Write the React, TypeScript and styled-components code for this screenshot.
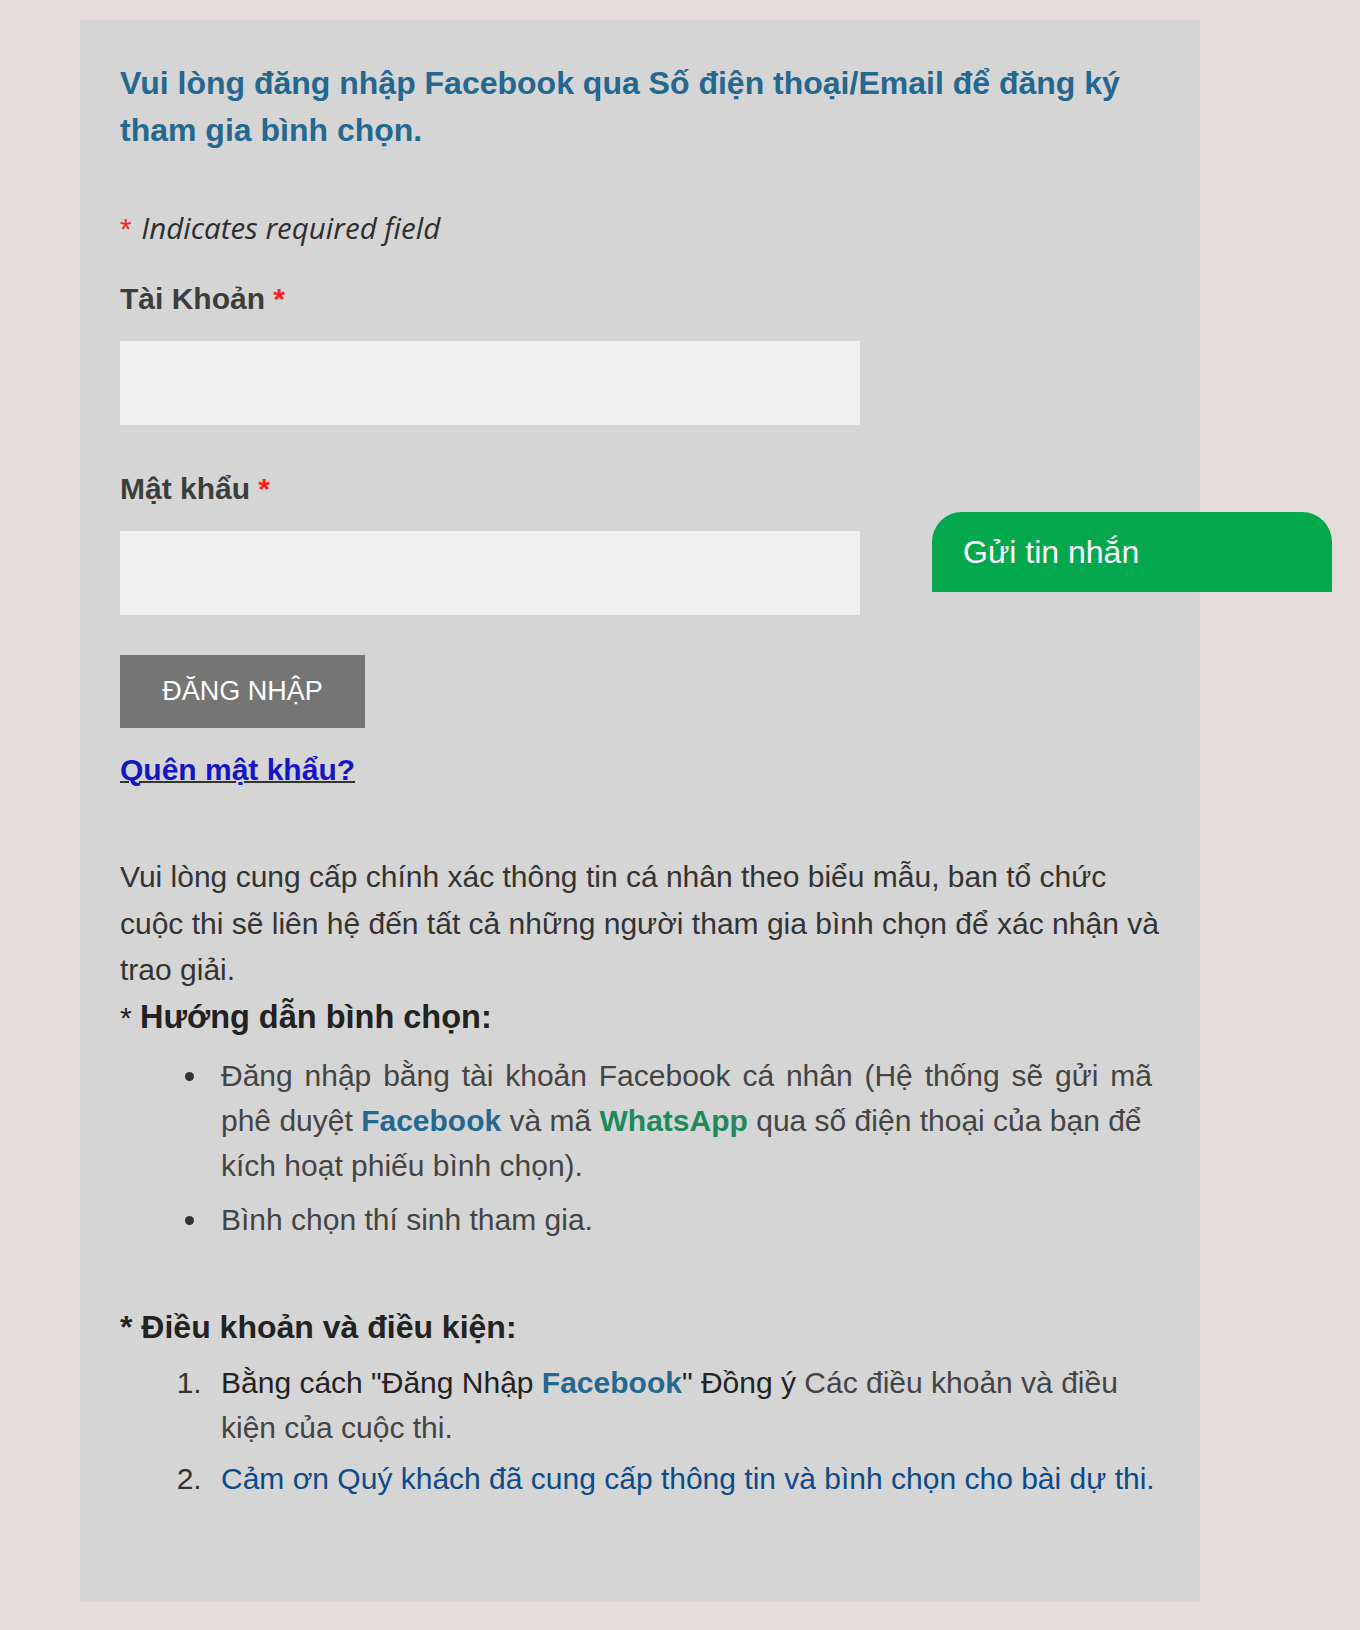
import React from "react";
import styled, { createGlobalStyle } from "styled-components";

const GlobalStyle = createGlobalStyle`
  html, body {
    margin: 0;
    padding: 0;
    background: #e3dcda;
  }
  body {
    font-family: "Liberation Sans", Arial, sans-serif;
  }
`;

const Page = styled.div`
  padding: 20px 0 27px 80px;
`;

const Panel = styled.div`
  width: 1120px;
  box-sizing: border-box;
  background: #d5d5d5;
  padding: 40px 40px 101px;
`;

const Heading = styled.h3`
  margin: 0;
  font-size: 32px;
  line-height: 47px;
  font-weight: bold;
  color: #24678f;
`;

const RequiredNote = styled.div`
  margin-top: 54px;
  font-family: "Open Sans", sans-serif;
  font-style: italic;
  font-size: 29.5px;
  line-height: 40px;
  color: #2e2e2e;
`;

const Star = styled.span`
  color: #ff2020;
  font-style: normal;
  font-family: "Liberation Sans", Arial, sans-serif;
  margin-right: 2px;
`;

const Label = styled.label<{ $top: number }>`
  display: block;
  margin-top: ${(p) => p.$top}px;
  font-size: 30px;
  line-height: 40px;
  font-weight: bold;
  color: #3d3d3d;
`;

const Input = styled.input`
  display: block;
  margin-top: 22px;
  width: 740px;
  height: 84px;
  box-sizing: border-box;
  border: none;
  background: #f0f0f0;
  outline: none;
`;

const SubmitButton = styled.button`
  display: block;
  margin-top: 40px;
  width: 245px;
  height: 73px;
  border: none;
  background: #757575;
  color: #fff;
  font-family: "Liberation Sans", Arial, sans-serif;
  font-size: 27px;
  padding: 0;
`;

const ForgotLink = styled.a`
  display: inline-block;
  margin-top: 22px;
  font-size: 30px;
  line-height: 40px;
  font-weight: bold;
  color: #1515c8;
  text-decoration: underline;
  text-decoration-color: #333;
  text-decoration-thickness: 2px;
`;

const Para = styled.p`
  margin: 64px 0 0;
  font-size: 30px;
  line-height: 46.5px;
  color: #333;
`;

const SectionTitle = styled.div<{ $top: number; $size: number }>`
  margin-top: ${(p) => p.$top}px;
  font-size: 30px;
  line-height: 46.5px;
  color: #222;
  strong {
    font-weight: bold;
    font-size: ${(p) => p.$size}px;
  }
`;

const List = styled.ul`
  margin: 12px 0 0;
  padding-left: 90px;
  font-size: 30px;
  line-height: 45px;
  color: #444;
  li {
    padding-left: 11px;
    margin-bottom: 9px;
  }
  li::marker {
    color: #333;
  }
`;

const NumberList = styled.ol`
  margin: 8px 0 0;
  padding-left: 90px;
  font-size: 30px;
  line-height: 45px;
  color: #444;
  li {
    padding-left: 11px;
  }
  li + li {
    margin-top: 6px;
  }
  li::marker {
    color: #333;
  }
`;

const Wide = styled.span`
  word-spacing: 3.5px;
`;

const Brand = styled.strong<{ $color: string }>`
  color: ${(p) => p.$color};
`;

const Dark = styled.span`
  color: #222;
`;

const Thanks = styled.span`
  color: #0c4a8a;
`;

const ChatTab = styled.div`
  position: fixed;
  top: 512px;
  right: 28px;
  width: 400px;
  height: 80px;
  box-sizing: border-box;
  padding-left: 31px;
  border-radius: 30px 30px 0 0;
  background: #03a84e;
  color: #fff;
  font-size: 32px;
  line-height: 80px;
`;

export default function App() {
  return (
    <>
      <GlobalStyle />
      <Page>
        <Panel>
          <Heading>
            Vui lòng đăng nhập Facebook qua Số điện thoại/Email để đăng ký
            tham gia bình chọn.
          </Heading>

          <RequiredNote>
            <Star>*</Star> Indicates required field
          </RequiredNote>

          <Label $top={30}>
            Tài Khoản <Star>*</Star>
          </Label>
          <Input type="text" />

          <Label $top={44}>
            Mật khẩu <Star>*</Star>
          </Label>
          <Input type="password" />

          <SubmitButton>ĐĂNG NHẬP</SubmitButton>

          <ForgotLink href="#">Quên mật khẩu?</ForgotLink>

          <Para>
            Vui lòng cung cấp chính xác thông tin cá nhân theo biểu mẫu, ban tổ
            chức cuộc thi sẽ liên hệ đến tất cả những người tham gia bình chọn
            để xác nhận và trao giải.
          </Para>
          <SectionTitle $top={0} $size={32.5}>
            * <strong>Hướng dẫn bình chọn:</strong>
          </SectionTitle>
          <List>
            <li>
              <Wide>
                Đăng nhập bằng tài khoản Facebook cá nhân (Hệ thống sẽ gửi mã
              </Wide>{" "}
              phê duyệt <Brand $color="#25688f">Facebook</Brand> và mã{" "}
              <Brand $color="#1e8a5c">WhatsApp</Brand> qua số điện thoại của
              bạn để kích hoạt phiếu bình chọn).
            </li>
            <li>Bình chọn thí sinh tham gia.</li>
          </List>

          <SectionTitle $top={62} $size={32}>
            <strong>* Điều khoản và điều kiện:</strong>
          </SectionTitle>
          <NumberList>
            <li>
              <Dark>
                Bằng cách "Đăng Nhập <Brand $color="#25688f">Facebook</Brand>"
                Đồng ý{" "}
              </Dark>
              Các điều khoản và điều kiện của cuộc thi.
            </li>
            <li>
              <Thanks>
                Cảm ơn Quý khách đã cung cấp thông tin và bình chọn cho bài dự
                thi.
              </Thanks>
            </li>
          </NumberList>
        </Panel>
      </Page>
      <ChatTab>Gửi tin nhắn</ChatTab>
    </>
  );
}
